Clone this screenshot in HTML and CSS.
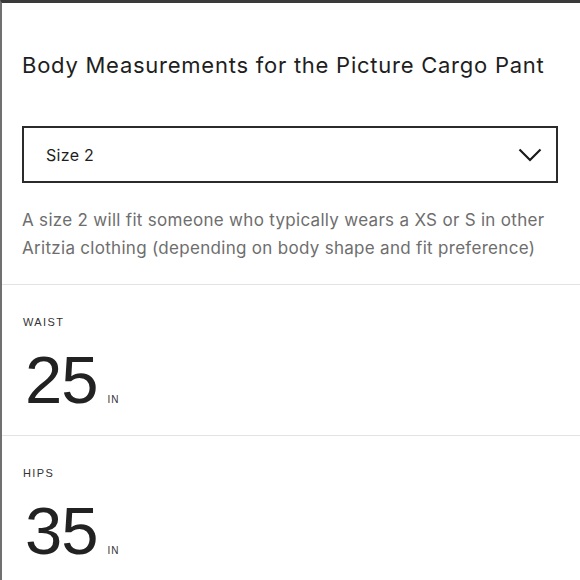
FILE: index.html
```html
<!DOCTYPE html>
<html>
<head>
<meta charset="utf-8">
<link rel="stylesheet" href="styles.css">
</head>
<body>
<div class="frame">
  <header class="head">
    <h1 class="title">Body Measurements for the Picture Cargo Pant</h1>
    <div class="select">
      <span class="select-text">Size 2</span>
      <svg class="chevron" width="24" height="14" viewBox="0 0 24 14"><polyline points="1.5,1.5 12,12 22.5,1.5" fill="none" stroke="#1a1a1a" stroke-width="2.2"/></svg>
    </div>
    <p class="desc">A size 2 will fit someone who typically wears a XS or S in other Aritzia clothing (depending on body shape and fit preference)</p>
  </header>
  <section class="measure">
    <div class="label">WAIST</div>
    <div class="value"><span class="num">25</span><span class="unit">IN</span></div>
  </section>
  <section class="measure">
    <div class="label">HIPS</div>
    <div class="value"><span class="num">35</span><span class="unit">IN</span></div>
  </section>
</div>
</body>
</html>
```
FILE: styles.css
```css
html, body {
  margin: 0;
  padding: 0;
  background: #fff;
}
.frame {
  height: 577px;
  overflow: hidden;
  border-top: 3px solid #3a3a3a;
  border-left: 2px solid #707070;
  font-family: "Inter", "Liberation Sans", sans-serif;
  color: #222;
}
.head {
  padding: 49px 22px 0 20px;
}
.title {
  margin: 0;
  font-size: 22px;
  line-height: 26px;
  font-weight: 400;
  letter-spacing: 0.75px;
  color: #1e1e1e;
}
.select {
  margin-top: 48px;
  height: 57px;
  box-sizing: border-box;
  border: 2px solid #2b2b2b;
  display: flex;
  align-items: center;
  justify-content: space-between;
  padding: 0 14px 0 22px;
}
.select-text {
  font-size: 16px;
  letter-spacing: 0.3px;
  color: #1e1e1e;
}
.desc {
  margin: 23px 0 0;
  font-size: 17px;
  line-height: 28px;
  letter-spacing: 0.3px;
  color: #6e6e6e;
  padding-bottom: 22px;
}
.measure {
  border-top: 1px solid #e3e3e3;
  padding: 31px 20px 21px 21px;
}
.label {
  font-family: "Liberation Sans", sans-serif;
  font-size: 11px;
  line-height: 13px;
  letter-spacing: 1.4px;
  color: #333;
}
.value {
  margin-top: 17px;
  display: flex;
  align-items: baseline;
  font-family: "Liberation Sans", sans-serif;
}
.num {
  font-size: 67px;
  line-height: 68px;
  color: #222;
  margin-left: 2px;
  letter-spacing: -1px;
}
.unit {
  margin-left: 10px;
  font-size: 10px;
  letter-spacing: 1px;
  color: #333;
}
```
